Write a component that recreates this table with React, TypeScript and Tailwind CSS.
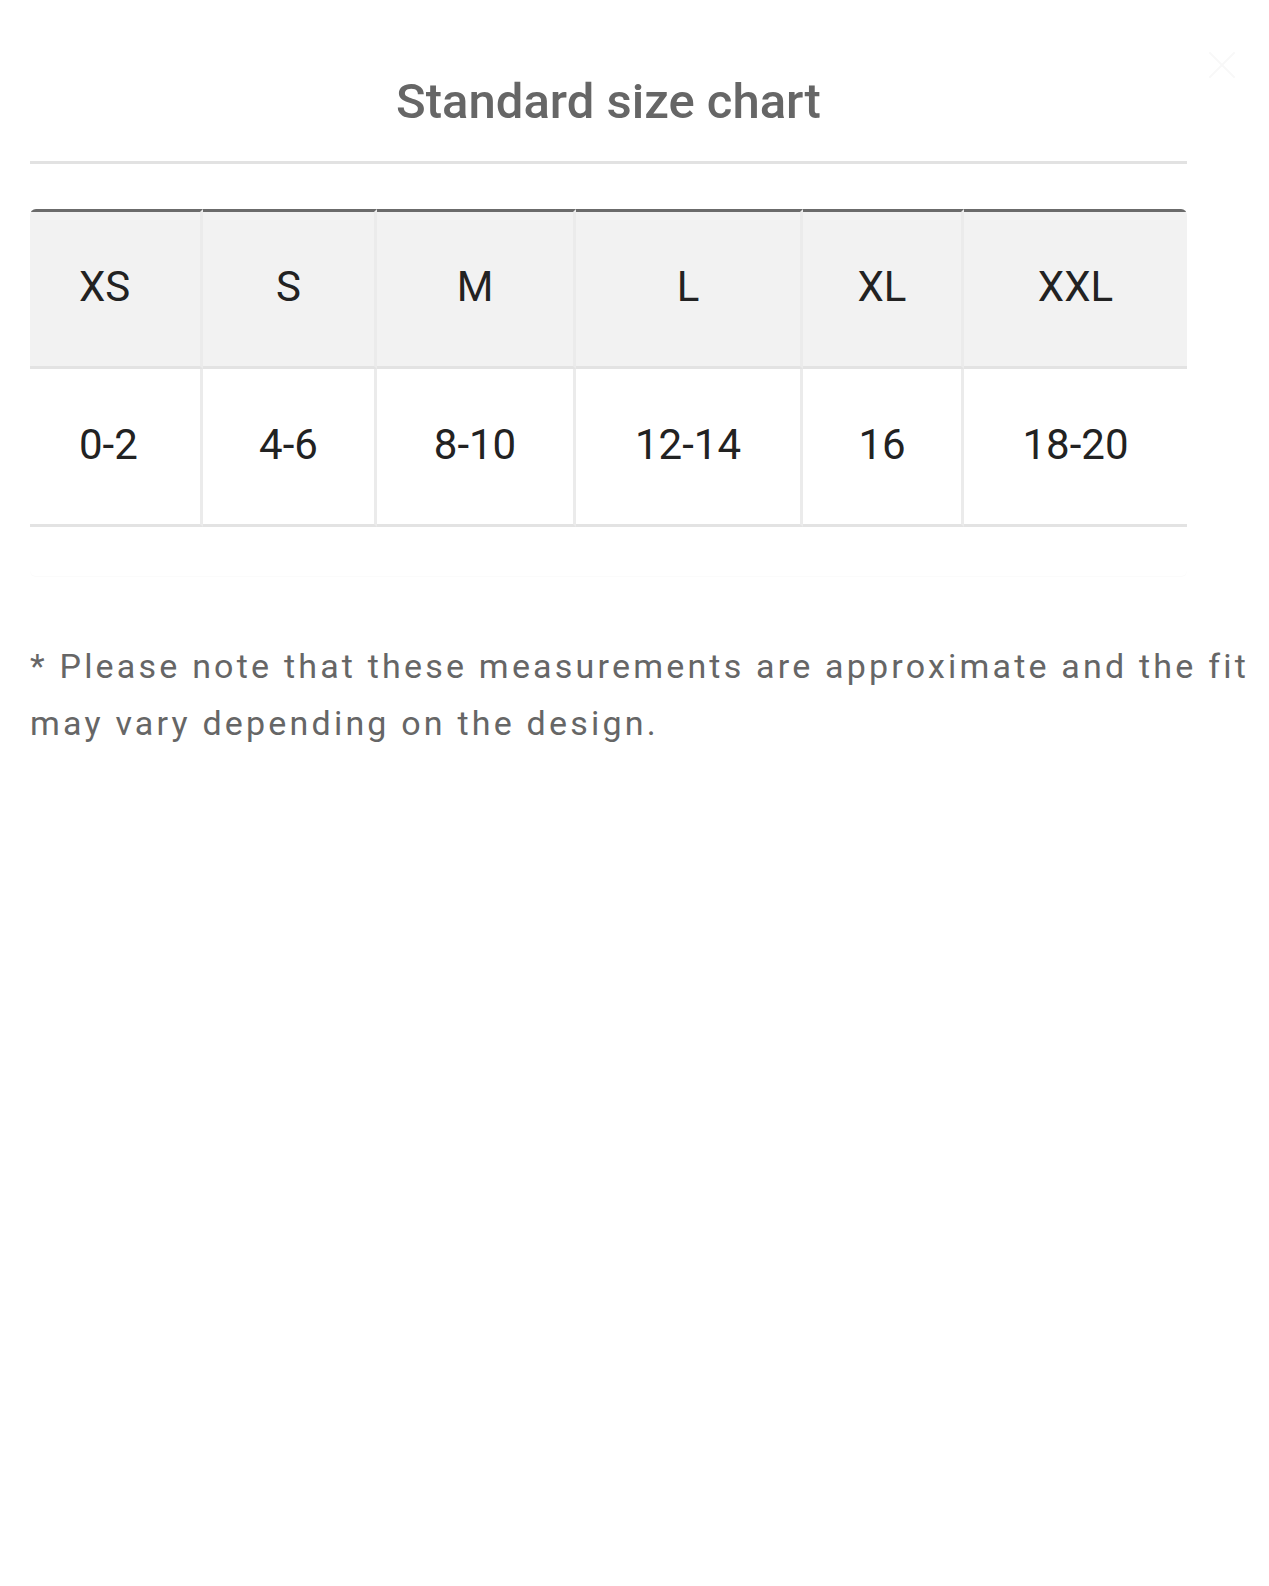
import React from "react";

const sizes = ["XS", "S", "M", "L", "XL", "XXL"];
const values = ["0-2", "4-6", "8-10", "12-14", "16", "18-20"];

export default function App() {
  return (
    <div
      className="relative w-[1269px] min-h-[1586px] bg-white pl-[30px]"
      style={{ fontFamily: "Roboto, 'Noto Sans', Arial, sans-serif" }}
    >
      <svg
        className="absolute left-[1208px] top-[51px]"
        width="28"
        height="28"
        viewBox="0 0 28 28"
        fill="none"
        stroke="#f8f8f8"
        strokeWidth="2"
        strokeLinecap="round"
      >
        <path d="M2 2 L26 26 M26 2 L2 26" />
      </svg>

      <div className="w-[1157px] pt-[72px]">
        <h1 className="text-center text-[49px] leading-[60px] font-medium text-[#666666]">
          Standard size chart
        </h1>
        <div className="mt-[29px] h-[3px] bg-[#e2e2e2]" />

        <div className="mt-[45px] overflow-hidden rounded-[6px] bg-white pb-[49px] shadow-[0_1px_1px_rgba(0,0,0,0.02)]">
          <div className="grid grid-cols-[173px_174px_199px_227px_161px_223px]">
            {sizes.map((s, i) => (
              <div
                key={s}
                className={
                  "flex h-[160px] items-center border-t-[3px] border-b-[3px] border-t-[#6b6b6b] border-b-[#e3e3e3] bg-[#f2f2f2] pb-[4px] text-[42px] leading-none text-[#222222] " +
                  (i === 0 ? "justify-start pl-[49px] " : "justify-center ") +
                  (i < 5 ? "border-r-[3px] border-r-[#ebebeb]" : "")
                }
              >
                {s}
              </div>
            ))}
            {values.map((v, i) => (
              <div
                key={v}
                className={
                  "flex h-[158px] items-center border-b-[3px] border-b-[#e3e3e3] bg-white pb-[4px] text-[42px] leading-none text-[#222222] " +
                  (i === 0 ? "justify-start pl-[49px] " : "justify-center ") +
                  (i < 5 ? "border-r-[3px] border-r-[#ebebeb]" : "")
                }
              >
                {v}
              </div>
            ))}
          </div>
        </div>
      </div>

      <p className="mt-[62px] w-[1239px] text-[34px] leading-[57px] tracking-[3.2px] text-[#666666]">
        * Please note that these measurements are approximate and the fit may vary depending on the design.
      </p>
    </div>
  );
}
